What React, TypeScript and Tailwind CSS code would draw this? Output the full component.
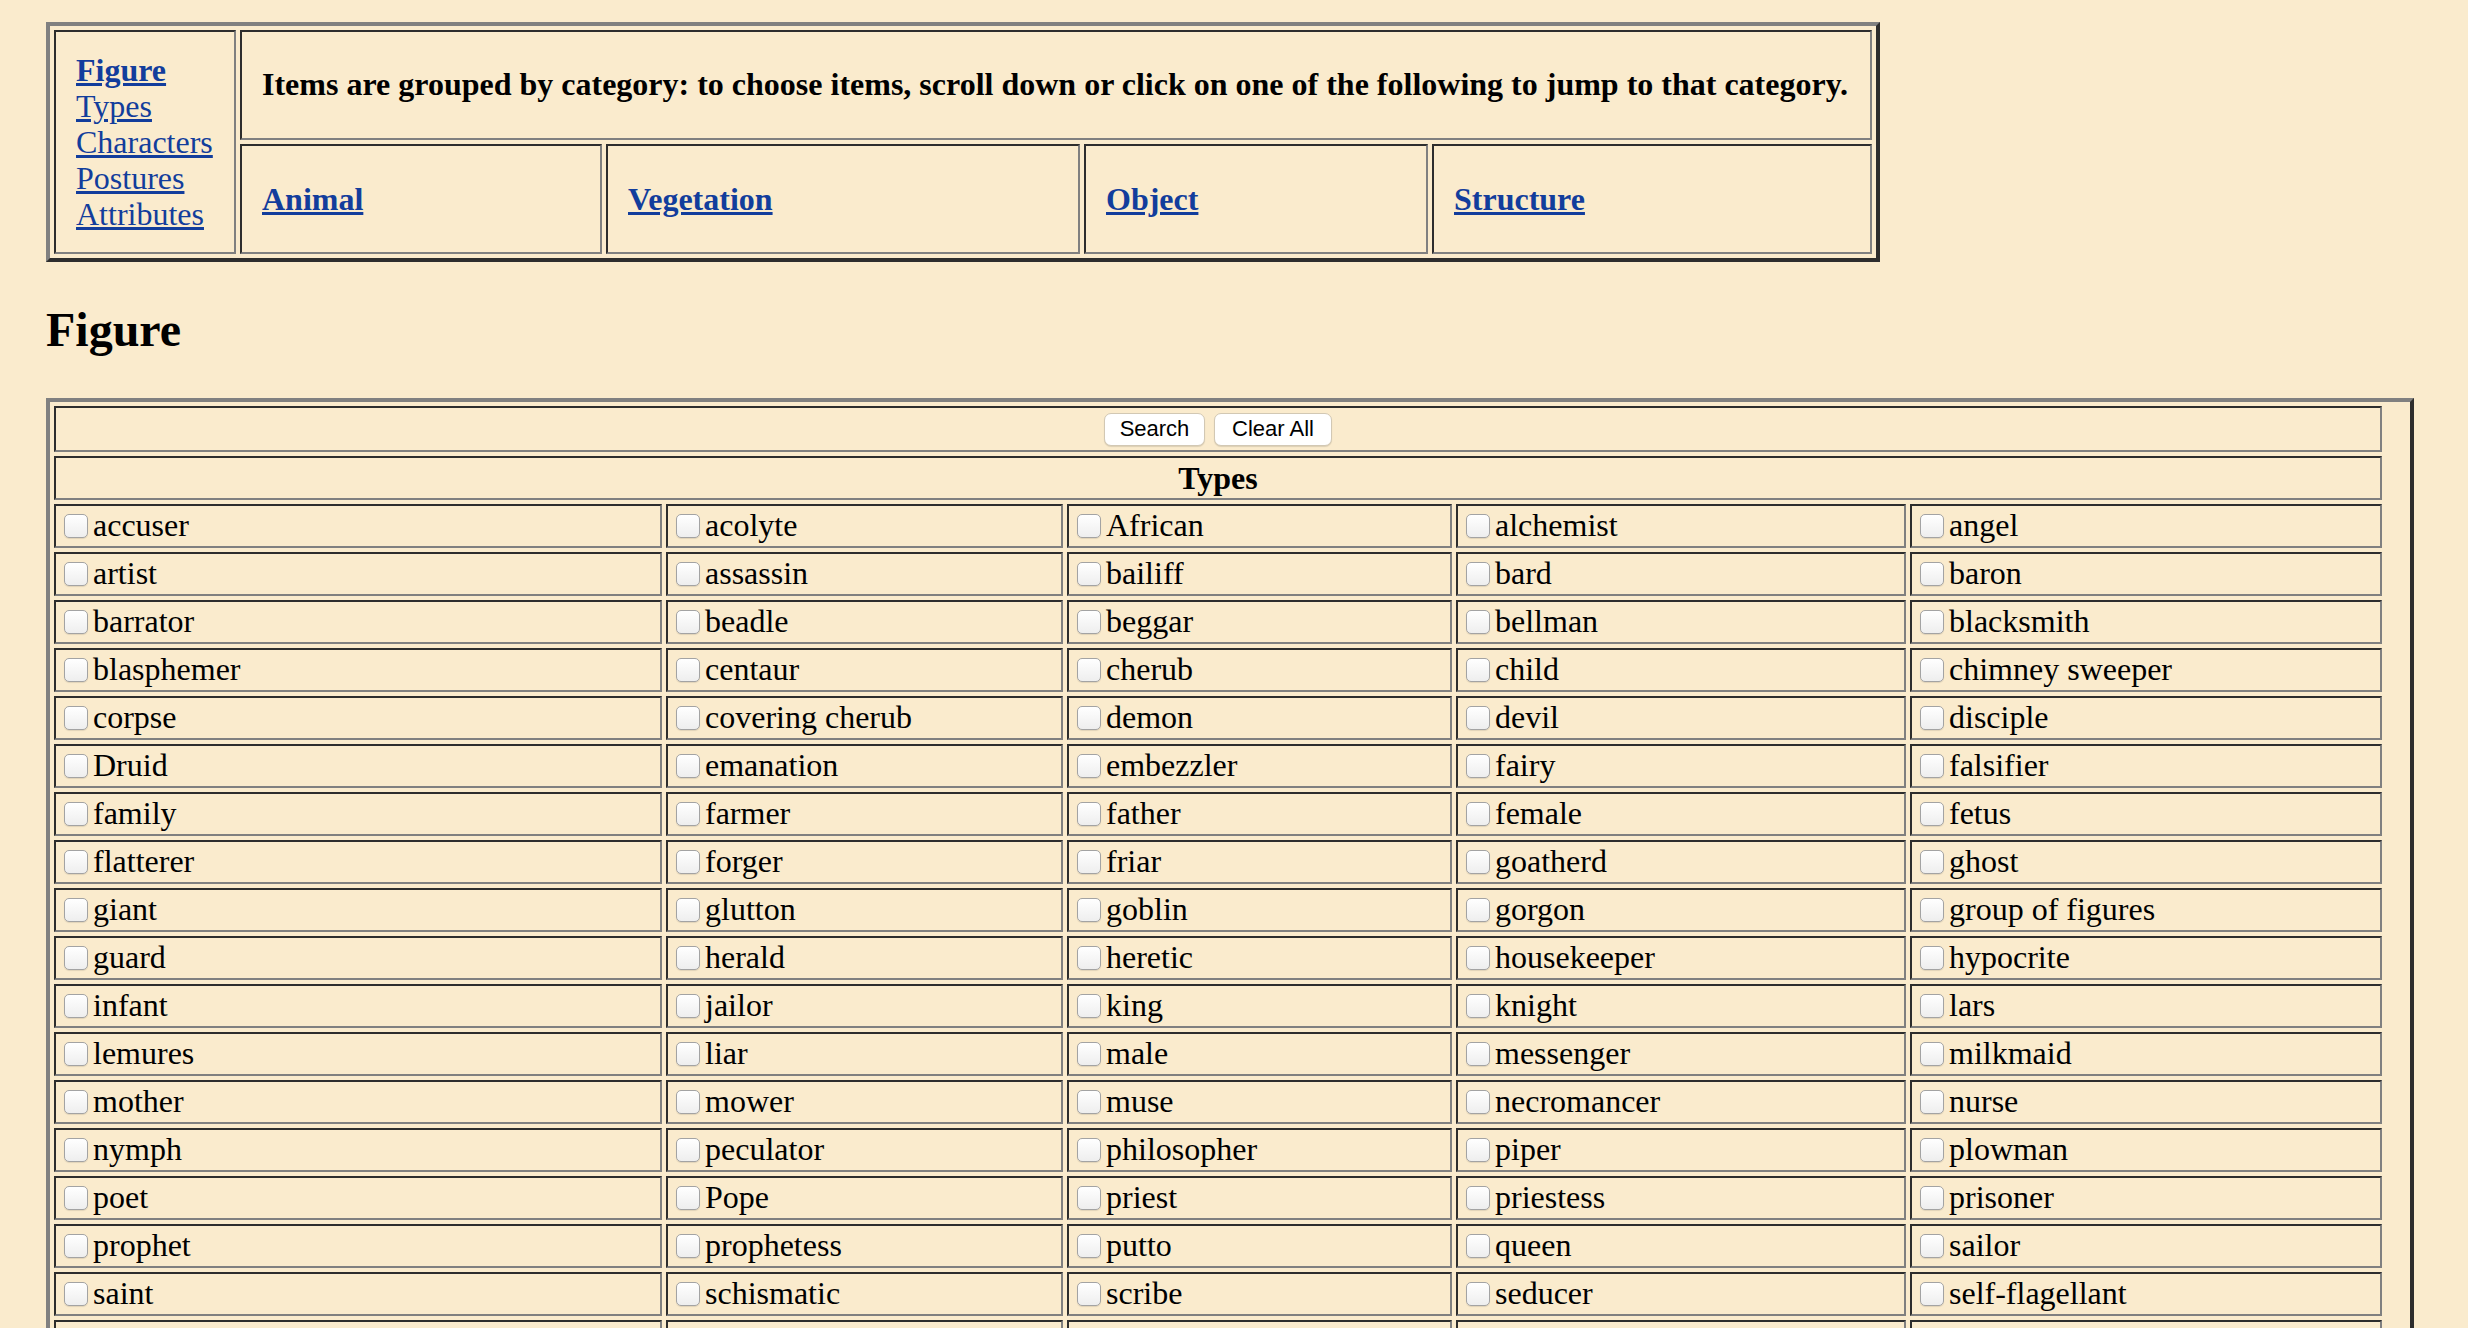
import React from "react";

const rows: string[][] = [
  ["accuser", "acolyte", "African", "alchemist", "angel"],
  ["artist", "assassin", "bailiff", "bard", "baron"],
  ["barrator", "beadle", "beggar", "bellman", "blacksmith"],
  ["blasphemer", "centaur", "cherub", "child", "chimney sweeper"],
  ["corpse", "covering cherub", "demon", "devil", "disciple"],
  ["Druid", "emanation", "embezzler", "fairy", "falsifier"],
  ["family", "farmer", "father", "female", "fetus"],
  ["flatterer", "forger", "friar", "goatherd", "ghost"],
  ["giant", "glutton", "goblin", "gorgon", "group of figures"],
  ["guard", "herald", "heretic", "housekeeper", "hypocrite"],
  ["infant", "jailor", "king", "knight", "lars"],
  ["lemures", "liar", "male", "messenger", "milkmaid"],
  ["mother", "mower", "muse", "necromancer", "nurse"],
  ["nymph", "peculator", "philosopher", "piper", "plowman"],
  ["poet", "Pope", "priest", "priestess", "prisoner"],
  ["prophet", "prophetess", "putto", "queen", "sailor"],
  ["saint", "schismatic", "scribe", "seducer", "self-flagellant"],
  ["shepherd", "sibyl", "simoniac", "skeleton", "slave"],
];

const cell =
  "border-2 border-t-[#2d2d2d] border-l-[#2d2d2d] border-b-[#808080] border-r-[#808080]";
const outer =
  "border-4 border-t-[#808080] border-l-[#808080] border-b-[#2d2d2d] border-r-[#2d2d2d]";

function Item({ label }: { label: string }) {
  return (
    <div className={`${cell} flex h-[44px] items-center pl-[8px] text-[32px] leading-[36px]`}>
      <input
        type="checkbox"
        readOnly
        className="m-0 h-[24px] w-[24px] shrink-0 appearance-none rounded-[5px] border-[1.5px] border-[#a3a3a3] bg-gradient-to-b from-white to-[#eeeeee] shadow-[0_1px_1px_rgba(0,0,0,0.1)]"
      />
      <span className="ml-[5px] -translate-y-[1px] whitespace-nowrap">{label}</span>
    </div>
  );
}

export default function App() {
  return (
    <div className="min-h-screen bg-[#faebcd] pb-[40px] pl-[46px] pt-[22px] font-['Liberation_Serif','Times_New_Roman',serif] text-black">
      <div className={`${outer} w-[1834px] p-[4px]`}>
        <div className="grid grid-cols-[182px_362px_474px_344px_440px] grid-rows-[110px_110px] gap-[4px]">
          <div className={`${cell} row-span-2 flex flex-col justify-center px-[20px] text-[32px] leading-[36px]`}>
            <a href="#figure" className="font-bold text-[#123d9c] underline">Figure</a>
            <a href="#types" className="text-[#123d9c] underline">Types</a>
            <a href="#characters" className="text-[#123d9c] underline">Characters</a>
            <a href="#postures" className="text-[#123d9c] underline">Postures</a>
            <a href="#attributes" className="text-[#123d9c] underline">Attributes</a>
          </div>
          <div className={`${cell} col-span-4 flex items-center px-[20px]`}>
            <span className="-translate-y-[1px] whitespace-nowrap text-[32px] font-bold leading-[36px]">
              Items are grouped by category: to choose items, scroll down or click on one of the following to jump to that category.
            </span>
          </div>
          {["Animal", "Vegetation", "Object", "Structure"].map((c) => (
            <div key={c} className={`${cell} flex items-center px-[20px]`}>
              <a href={`#${c.toLowerCase()}`} className="text-[32px] font-bold leading-[36px] text-[#123d9c] underline">
                {c}
              </a>
            </div>
          ))}
        </div>
      </div>

      <h2 className="mb-[40px] mt-[40px] text-[48px] font-bold leading-[56px]">Figure</h2>

      <div className={`${outer} w-[2368px] pb-[4px] pl-[4px] pr-[28px] pt-[4px]`}>
        <div className="grid grid-cols-[608px_397px_385px_450px_472px] gap-[4px]">
          <div className={`${cell} col-span-5 flex h-[46px] items-center justify-center gap-[9px]`}>
            <button className="h-[33px] w-[101px] rounded-[7px] border border-[#d2c8b4] bg-white font-['Liberation_Sans',Arial,sans-serif] text-[22px] leading-none text-black shadow-[0_1px_1px_rgba(0,0,0,0.12)]">
              Search
            </button>
            <button className="h-[33px] w-[118px] rounded-[7px] border border-[#d2c8b4] bg-white font-['Liberation_Sans',Arial,sans-serif] text-[22px] leading-none text-black shadow-[0_1px_1px_rgba(0,0,0,0.12)]">
              Clear All
            </button>
          </div>
          <div className={`${cell} col-span-5 flex h-[44px] items-center justify-center text-[32px] font-bold leading-[36px]`}>
            Types
          </div>
          {rows.map((r, i) =>
            r.map((label, j) => <Item key={`${i}-${j}`} label={label} />)
          )}
        </div>
      </div>
    </div>
  );
}
